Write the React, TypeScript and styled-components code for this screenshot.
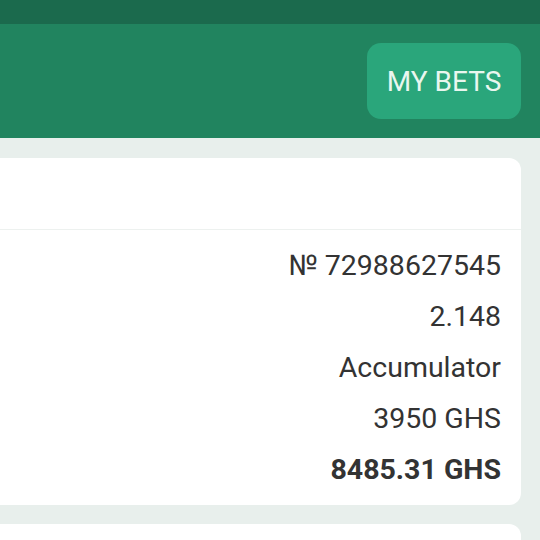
import styled, { createGlobalStyle } from "styled-components";

const GlobalStyle = createGlobalStyle`
  html, body {
    margin: 0;
    padding: 0;
    background: #e8efec;
    font-family: Roboto, "Liberation Sans", sans-serif;
  }
`;

interface BetLine {
  value: string;
  strong?: boolean;
}

const lines: BetLine[] = [
  { value: "№ 72988627545" },
  { value: "2.148" },
  { value: "Accumulator" },
  { value: "3950 GHS" },
  { value: "8485.31 GHS", strong: true },
];

export default function App() {
  return (
    <>
      <GlobalStyle />
      <Screen>
        <StatusBar />
        <Header>
          <BetsButton>MY BETS</BetsButton>
        </Header>
        <List>
          <Card>
            <CardTop />
            <Rows>
              {lines.map((line) => (
                <Row key={line.value} $strong={line.strong}>
                  {line.value}
                </Row>
              ))}
            </Rows>
          </Card>
          <Card />
        </List>
      </Screen>
    </>
  );
}

const Screen = styled.div`
  width: 540px;
  height: 540px;
  overflow: hidden;
  display: flex;
  flex-direction: column;
  background: #e8efec;
`;

const StatusBar = styled.div`
  height: 24px;
  flex-shrink: 0;
  background: #1b6a4d;
`;

const Header = styled.header`
  height: 114px;
  flex-shrink: 0;
  display: flex;
  align-items: center;
  justify-content: flex-end;
  padding-right: 19px;
  background: #21845f;
`;

const BetsButton = styled.button`
  width: 154px;
  height: 76px;
  border: none;
  border-radius: 14px;
  background: #2aa67b;
  color: #e9f7ef;
  font-family: Roboto, "Liberation Sans", sans-serif;
  font-size: 28px;
  font-weight: 400;
  padding: 0;
`;

const List = styled.div`
  display: flex;
  flex-direction: column;
  gap: 19px;
  padding: 20px 19px 0 0;
`;

const Card = styled.div`
  margin-left: -20px;
  min-height: 80px;
  background: #ffffff;
  border-radius: 12px;
`;

const CardTop = styled.div`
  height: 71px;
  border-bottom: 1px solid #edf1ef;
`;

const Rows = styled.div`
  display: flex;
  flex-direction: column;
  padding: 10px 20px 10px 0;
`;

const Row = styled.div<{ $strong?: boolean }>`
  height: 51px;
  display: flex;
  align-items: center;
  justify-content: flex-end;
  font-size: 28.5px;
  font-weight: ${(p) => (p.$strong ? 700 : 400)};
  color: #333333;
`;
